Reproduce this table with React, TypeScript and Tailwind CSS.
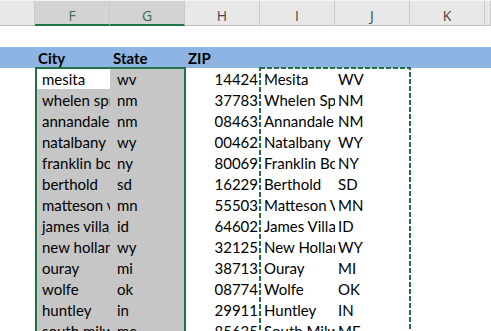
import React from "react";

const rows: [string, string, string, string, string][] = [
  ["mesita", "wv", "14424", "Mesita", "WV"],
  ["whelen springs", "nm", "37783", "Whelen Springs", "NM"],
  ["annandale", "nm", "08463", "Annandale", "NM"],
  ["natalbany", "wy", "00462", "Natalbany", "WY"],
  ["franklin borough", "ny", "80069", "Franklin Borough", "NY"],
  ["berthold", "sd", "16229", "Berthold", "SD"],
  ["matteson village", "mn", "55503", "Matteson Village", "MN"],
  ["james village", "id", "64602", "James Village", "ID"],
  ["new holland", "wy", "32125", "New Holland", "WY"],
  ["ouray", "mi", "38713", "Ouray", "MI"],
  ["wolfe", "ok", "08774", "Wolfe", "OK"],
  ["huntley", "in", "29911", "Huntley", "IN"],
  ["south milwaukee", "me", "85635", "South Milwaukee", "ME"],
];

const font = { fontFamily: "Lato, 'Liberation Sans', sans-serif" };

function HeadCell({ w, label, sel }: { w: string; label: string; sel?: boolean }) {
  return (
    <div
      className={`${w} h-[25px] shrink-0 flex items-center justify-center pt-[5px] border-r border-[#c9c9c9] text-[14px] ${
        sel
          ? "bg-[#d3d3d3] text-[#3b6a4c] border-b-2 border-b-[#217346]"
          : "bg-[#e8e8e8] text-[#444] border-b border-b-[#bfbfbf]"
      }`}
      style={{ fontFamily: "'Open Sans', 'Liberation Sans', sans-serif" }}
    >
      {label}
    </div>
  );
}

export default function App() {
  return (
    <div className="w-[491px] h-[331px] overflow-hidden bg-white text-black relative" style={font}>
      {/* column headers */}
      <div className="flex border-t border-t-[#f3f3f3]">
        <HeadCell w="w-[35px]" label="" />
        <HeadCell w="w-[75px]" label="F" sel />
        <HeadCell w="w-[75px]" label="G" sel />
        <HeadCell w="w-[75px]" label="H" />
        <HeadCell w="w-[75px]" label="I" />
        <HeadCell w="w-[75px]" label="J" />
        <HeadCell w="w-[75px]" label="K" />
        <HeadCell w="w-[6px]" label="" />
      </div>
      {/* blank row */}
      <div className="h-[21px]" />
      {/* blue header row */}
      <div className="flex h-[21px] bg-[#8db4e2] font-bold text-[15px] leading-[21px]">
        <div className="w-[35px] shrink-0" />
        <div className="w-[75px] shrink-0 pl-[3px] pt-[1px]">City</div>
        <div className="w-[75px] shrink-0 pl-[3px] pt-[1px]">State</div>
        <div className="w-[75px] shrink-0 pl-[3px] pt-[1px]">ZIP</div>
      </div>
      {/* data */}
      <div className="relative text-[15px]">
        {rows.map((r, i) => (
          <div key={i} className="flex h-[21px] leading-[21px]">
            <div className="w-[35px] shrink-0" />
            <div
              className={`w-[75px] shrink-0 overflow-hidden whitespace-nowrap pl-[7px] pt-[1px] ${
                i === 0 ? "bg-white" : "bg-[#c6c6c6]"
              }`}
            >
              {r[0]}
            </div>
            <div className="w-[75px] shrink-0 overflow-hidden whitespace-nowrap pl-[7px] pt-[1px] bg-[#c6c6c6]">
              {r[1]}
            </div>
            <div className="w-[75px] shrink-0 overflow-hidden whitespace-nowrap text-right pr-[2px] pt-[1px]">
              {r[2]}
            </div>
            <div className="w-[75px] shrink-0 overflow-hidden whitespace-nowrap pl-[4px] pt-[1px]">
              {r[3]}
            </div>
            <div className="w-[75px] shrink-0 overflow-hidden whitespace-nowrap pl-[3px] pt-[1px]">
              {r[4]}
            </div>
          </div>
        ))}
        {/* selection border */}
        <div className="absolute left-[35px] top-[-1px] w-[151px] h-[300px] border-2 border-[#217346] pointer-events-none" />
        {/* copy marquee */}
        <svg className="absolute left-[259px] top-[-1px] pointer-events-none" width="153" height="300">
          <rect
            x="1"
            y="1"
            width="150"
            height="310"
            fill="none"
            stroke="#217346"
            strokeWidth="2"
            strokeDasharray="5 2"
          />
        </svg>
      </div>
    </div>
  );
}
